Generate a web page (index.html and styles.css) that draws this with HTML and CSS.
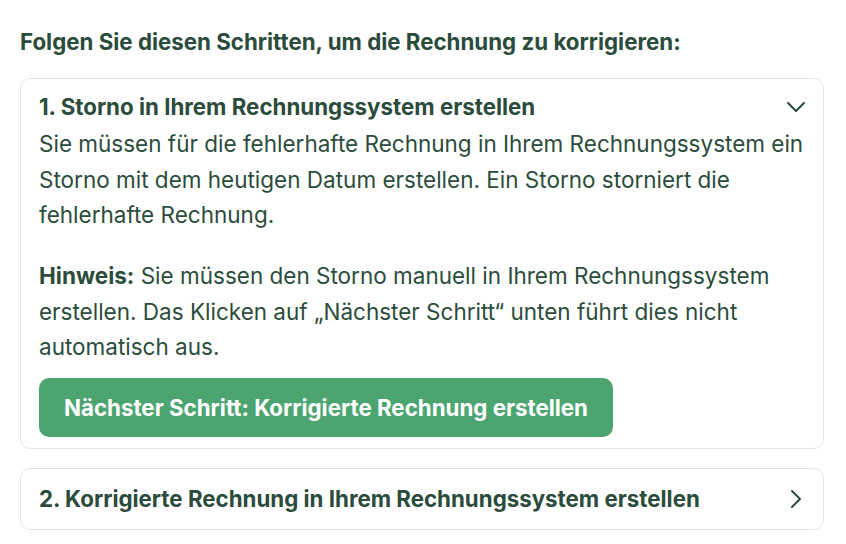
FILE: index.html
```html
<!DOCTYPE html>
<html lang="de">
<head>
    <meta charset="utf-8">
    <title>Rechnung korrigieren</title>
    <meta name="viewport" content="width=device-width, initial-scale=1">
    <link rel="stylesheet" href="styles.css">
</head>
<body>
    <main class="steps">
        <h2 class="steps-title">Folgen Sie diesen Schritten, um die Rechnung zu korrigieren:</h2>

        <section class="step open">
            <div class="step-head">
                <h3>1. Storno in Ihrem Rechnungssystem erstellen</h3>
                <svg class="chevron" width="20" height="20" viewBox="0 0 20 20"><path d="M2 6l8 8 8-8" fill="none" stroke="currentColor" stroke-width="2" stroke-linecap="round" stroke-linejoin="round"/></svg>
            </div>
            <div class="step-body">
                <p>Sie müssen für die fehlerhafte Rechnung in Ihrem Rechnungssystem ein Storno mit dem heutigen Datum erstellen. Ein Storno storniert die fehlerhafte Rechnung.</p>
                <p><strong>Hinweis:</strong> Sie müssen den Storno manuell in Ihrem Rechnungssystem erstellen. Das Klicken auf „Nächster Schritt“ unten führt dies nicht automatisch aus.</p>
                <button class="btn-next">Nächster Schritt: Korrigierte Rechnung erstellen</button>
            </div>
        </section>

        <section class="step">
            <div class="step-head">
                <h3>2. Korrigierte Rechnung in Ihrem Rechnungssystem erstellen</h3>
                <svg class="chevron" width="20" height="20" viewBox="0 0 20 20"><path d="M6 2l8 8-8 8" fill="none" stroke="currentColor" stroke-width="2" stroke-linecap="round" stroke-linejoin="round"/></svg>
            </div>
        </section>
    </main>
</body>
</html>
```

FILE: styles.css
```css
/* Font */
body {
    margin: 0;
    font-family: "Inter", "Noto Sans", sans-serif;
    color: #2b4c3c;
    background: #fff;
}

/* Steps */
.steps {
    padding: 29px 22px 0 20px;
    display: flex;
    flex-direction: column;
    gap: 19px;
}
.steps-title {
    margin: 0 0 4px 0;
    font-size: 22.3px;
    font-weight: 700;
    line-height: 26px;
}
.step {
    border: 1px solid #e3e5e4;
    border-radius: 10px;
    padding: 14px 17px 11px 18px;
}
.step + .step {
    padding: 16px 17px 16px 18px;
}
.step-head {
    display: flex;
    align-items: center;
    justify-content: space-between;
}
.step-head h3 {
    margin: 0;
    font-size: 22.3px;
    font-weight: 700;
    line-height: 28px;
}
.chevron {color: #2b4c3c}

/* Body text */
.step-body {padding-top: 5px}
.step-body p {
    margin: 0 0 25.5px 0;
    font-size: 22.5px;
    line-height: 35.5px;
}
.step-body p + p {margin-bottom: 13px}
.step-body p strong {font-weight: 700}
.btn-next {
    display: block;
    font-family: inherit;
    font-size: 22.3px;
    font-weight: 700;
    color: #fff;
    background-color: #4ca571;
    border: none;
    border-radius: 10px;
    padding: 0 25px;
    height: 59px;
}
```
